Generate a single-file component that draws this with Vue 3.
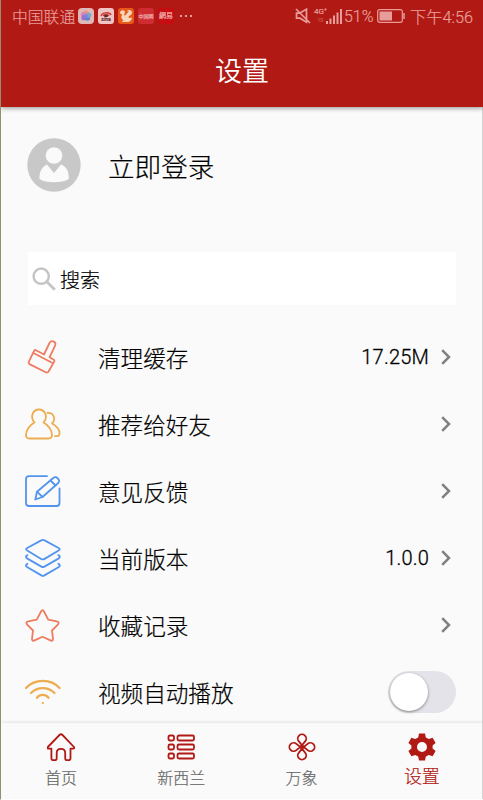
<template>
    <div class="screen">
        <header class="header">
            <div class="status-bar">
                <span class="carrier">中国联通</span>
                <div class="apps">
                    <span class="app app-flower">
                        <svg viewBox="0 0 16 16">
                            <circle cx="8" cy="5" r="2.6" fill="#ed9874" />
                            <circle cx="5.5" cy="6.5" r="2.6" fill="#d782bc" />
                            <circle cx="6" cy="9.7" r="2.6" fill="#9a6fd3" />
                            <circle cx="9.5" cy="10" r="2.6" fill="#5b83cf" />
                            <circle cx="10.7" cy="7" r="2.6" fill="#74a9c7" />
                            <circle cx="8" cy="8" r="2" fill="#8e7fdc" />
                        </svg>
                    </span>
                    <span class="app app-sina">
                        <svg viewBox="0 0 16 16" fill="none">
                            <path d="M3 7c1-4 9-4 10-1M5 7c1-2 5-2 6 0" stroke="#c83b37" stroke-width="1.5" />
                            <ellipse cx="8" cy="7" rx="2" ry="1.3" fill="#57282a" />
                        </svg>
                        <b>sina</b>
                    </span>
                    <span class="app app-uc">
                        <svg viewBox="0 0 16 16" fill="#f9d5ba">
                            <path d="M2 4.5c.5-2 3-3 4.500-1.500C8 4.500 5.500 6 6.500 7.500 8 7.500 8 5.500 10 4.500c1.300-.7.300-1.500-.5-1C8.500 3 10 1.700 11.500 2c3 .6 3.500 4 .5 5.500-1.500.8-2 1.800-1 2.300s1.800-.3 2.600-.3c.8 2.500-1.600 4.500-4.600 4.500H4c.3-1 1-1.500 2-1.700C3.500 11.500 2.500 9 4.300 6.500 3.500 6 2 6 2 4.500z" />
                        </svg>
                    </span>
                    <span class="app app-news"><b>中国网</b></span>
                    <span class="app app-netease"><b>網易</b></span>
                </div>
                <span class="more"><i></i><i></i><i></i></span>
                <div class="system">
                    <svg class="mute" viewBox="0 0 16 16" fill="none" stroke="currentColor" stroke-width="1.7">
                        <path d="M1.500 5.200h3l7-4v13l-6.500-4H1.500zM1 1l14 14" />
                    </svg>
                    <span class="network"><b>4G⁺</b><small>1S</small></span>
                    <svg class="signal" viewBox="0 0 16 15" fill="currentColor">
                        <path d="M0 12h2v3H0zM3.500 9.500h2V15h-2zM7 6.500h2V15H7zM10.500 3.500h2V15h-2zM14 0h2v15h-2z" />
                    </svg>
                    <span class="percent">51%</span>
                    <svg class="battery" viewBox="0 0 28 14" fill="none">
                        <rect x=".7" y=".7" width="24.6" height="12.6" rx="2" stroke="currentColor" stroke-width="1.2" />
                        <path d="M2.500 2.500h12.500v9H2.500z" fill="currentColor" />
                        <path d="M27 4v6" stroke="currentColor" stroke-width="1.5" />
                    </svg>
                    <span class="clock">下午4:56</span>
                </div>
            </div>
            <h1 class="title">设置</h1>
        </header>

        <main class="content">
            <div class="login">
                <svg class="avatar" viewBox="0 0 54 54">
                    <circle cx="27" cy="27" r="26.7" fill="#c8c8c8" />
                    <path d="M20 26.500 27 35l7-8.500c6 2 8 8 7.800 14.500C35 45.400 19 45.400 12.500 41 12 34.500 15 28.500 20 26.500z" fill="#fafafa" />
                    <circle cx="27" cy="17.500" r="8.600" fill="#fafafa" stroke="#c8c8c8" stroke-width=".6" />
                </svg>
                <span>立即登录</span>
            </div>

            <label class="search">
                <svg viewBox="0 0 24 24" fill="none" stroke="#c5c5c5">
                    <circle cx="9.200" cy="9.200" r="7.600" stroke-width="2.500" />
                    <path d="m14.800 14.800 8 8" stroke-width="2.800" />
                </svg>
                <span>搜索</span>
            </label>

            <ul class="list">
                <li v-for="item in items" :key="item.label" class="row">
                    <svg class="icon" :class="item.color" viewBox="0 0 36 40">
                        <path v-for="d in item.paths" :key="d" :d="d" />
                    </svg>
                    <span class="label">{{ item.label }}</span>
                    <span v-if="item.value" class="value">{{ item.value }}</span>
                    <button v-if="item.toggle" class="switch" role="switch" :aria-checked="autoplay"
                        :class="{ on: autoplay }" @click="autoplay = !autoplay">
                        <span class="knob"></span>
                    </button>
                    <svg v-else class="arrow" viewBox="0 0 10 16"><path d="m1.200 1.200 6.800 6.800-6.800 6.800" /></svg>
                </li>
            </ul>
        </main>

        <nav class="tabs">
            <a v-for="tab in tabs" :key="tab.label" class="tab" :class="{ active: tab.active }">
                <svg viewBox="0 0 28 28"><path v-for="d in tab.paths" :key="d" :d="d" /></svg>
                <span>{{ tab.label }}</span>
            </a>
        </nav>
    </div>
</template>

<script setup>
import { ref } from 'vue';

const autoplay = ref(false);

const items = [
    {
        label: '清理缓存', value: '17.25M', color: 'coral',
        paths: [
            'M10.500 13l8.500 4.500 5.500-11.500c2-3.500 7.500-1.200 5.500 2.800l-5.500 11.500 4 2.200c1.200.7 1 1.600.4 2.600l-5.200 9.200c-.7 1.300-1.800 1.600-3 .9L5 27.400c-1.500-.8-1.700-1.800-1-3l5-10.200c.4-.9.7-1.600 1.500-1.200z',
            'M8.500 16l18.500 9.700',
        ],
    },
    {
        label: '推荐给好友', color: 'orange',
        paths: [
            'M9.500 18.500C4.500 13 8 5.500 14 5.500s9.500 7.500 4.500 13c5 2.500 8.500 8 8.500 12.500 0 2.500-1 3.500-3.500 3.500h-19C2 34.500 1 33.500 1 31c0-4.500 3.500-10 8.500-12.500z',
            'M22.500 9c6-.5 9 6 4.500 10.500 5 2.500 8 7 7.500 10 0 2-1 2.800-4.500 2.700',
        ],
    },
    {
        label: '意见反馈', color: 'blue',
        paths: [
            'M22 5.200H4C2 5.200 1 6.200 1 8.200V32c0 2 1 3 3 3h27.500c2 0 3-1 3-3V17.500',
            'M10.300 28.500l1.700-7.800L28.500 6.800c1.500-1.300 3.300-.6 4.500.8 1.300 1.500 1.700 3.100.2 4.400L17.500 26z',
            'M12 20.700l5.500 5.300M25.500 9.500l5 5',
        ],
    },
    {
        label: '当前版本', value: '1.0.0', color: 'blue',
        paths: [
            'M16.200 2.400L2.200 10c-1.500.8-1.500 1.700 0 2.500l14 8.400c1.200.7 2.200.7 3.400 0l14-8.400c1.500-.8 1.500-1.700 0-2.500l-14-7.600c-1.200-.7-2.200-.7-3.400 0z',
            'M2.400 17.200c-1.900.8-1.900 2.400 0 3.400l14 8c1.100.6 1.900.6 3 0l14-8c1.900-1 1.900-2.600 0-3.400',
            'M2.400 25.800c-1.900.8-1.900 2.400 0 3.400l14 8.200c1.100.6 1.900.6 3 0l14-8.200c1.900-1 1.900-2.600 0-3.400',
        ],
    },
    {
        label: '收藏记录', color: 'coral',
        paths: [
            'M16 6.500c.7-1.700 2.300-1.700 3 0l4.200 8.200 8.600 1.700c1.900.3 2.400 1.800 1 3.200l-5.800 5.900 1 8.400c.2 1.700-1 2.300-2.600 1.500l-7.900-3.600-7.900 3.600c-1.600.8-2.800.2-2.600-1.500l1-8.400-5.800-5.900c-1.400-1.400-.9-2.900 1-3.200l8.600-1.700z',
        ],
    },
    {
        label: '视频自动播放', color: 'orange wifi', toggle: true,
        paths: [
            'M1 16C10 6.500 26 6.500 34.500 16',
            'M6 21c6.500-6.500 17-6.500 23.500 0',
            'M12 25.800c3-3.800 8.500-3.800 11.500 0',
            'M17.800 31h.1',
        ],
    },
];

const tabs = [
    { label: '首页', paths: ['M.8 14 12.500 2c1-1 2-1 3 0L27 14c.8 1 .3 1.600-.8 1.600h-2.700v10c0 1-.6 1.600-1.600 1.600h-2.200c-1 0-1.500-.6-1.500-1.600V20c0-5.400-8.500-5.400-8.500 0v5.600c0 1-.5 1.600-1.500 1.600H6c-1 0-1.600-.6-1.600-1.600v-10H1.600C.5 15.600 0 15 .8 14z'] },
    {
        label: '新西兰',
        paths: [2.5, 11.5, 20.5].map(y =>
            `M3 ${y}h2.500q1.500 0 1.500 1.500v2q0 1.500-1.500 1.500H3q-1.500 0-1.500-1.500v-2q0-1.500 1.500-1.500zM12 ${y}h13.500q1.500 0 1.500 1.500v2q0 1.500-1.500 1.500H12q-1.500 0-1.500-1.500v-2q0-1.500 1.500-1.500z`),
    },
    {
        label: '万象',
        paths: [
            'M14 12.300 10.900 8.400a4.200 4.200 0 1 1 6.200 0z',
            'M15.700 14l3.900-3.100a4.200 4.200 0 1 1 0 6.200z',
            'M14 15.700l3.100 3.900a4.200 4.200 0 1 1-6.200 0z',
            'M12.300 14l-3.900 3.100a4.200 4.200 0 1 1 0-6.200z',
            'M12.300 12.300l3.400 3.400M15.700 12.300l-3.400 3.400',
        ],
    },
    {
        label: '设置', active: true,
        paths: ['M11 .5h6l.8 3.900 3 1.700 3.800-1.300 3 5.200-3 2.600v2.800l3 2.600-3 5.200-3.800-1.300-3 1.700-.8 3.900h-6l-.8-3.900-3-1.700-3.800 1.300-3-5.200 3-2.600v-2.800L.4 10l3-5.200 3.800 1.300 3-1.700zM14 9a5 5 0 1 0 0 10 5 5 0 0 0 0-10z'],
    },
];
</script>

<style>
body {
    margin: 0;
}
</style>

<style scoped>
.screen {
    box-sizing: border-box;
    height: 800px;
    display: flex;
    flex-direction: column;
    border-left: 1px solid #939070;
    border-bottom: 1px solid #fff;
    background: #fafafa;
    color: #000;
    font-family: Roboto, "Noto Sans CJK SC", sans-serif;
    font-weight: 300;
    -webkit-text-stroke: .2px currentColor;
    overflow: hidden;
}

.header {
    height: 107px;
    flex: none;
    background: #b11914;
    box-shadow: 0 1px 5px #00000070;
    z-index: 1;
}

.status-bar {
    height: 32px;
    display: flex;
    align-items: center;
    padding: 0 10px 0 11px;
    color: #e79d99;
    font-size: 16px;
    white-space: nowrap;
}

.carrier {
    width: 66px;
    font-size: 15.8px;
}

.apps {
    display: flex;
    gap: 4px;
}

.app {
    width: 16px;
    height: 16px;
    border-radius: 3px;
    display: flex;
    flex-direction: column;
    align-items: center;
    justify-content: center;
    overflow: hidden;
}

.app svg {
    width: 16px;
    height: 16px;
    flex: none;
}

.app b {
    font-size: 5px;
    line-height: 6px;
}

.app-flower { background: #dfb8b7; border-radius: 4px; }
.app-sina { background: #efc4c3; color: #5b2526; }
.app-sina svg { margin-top: -1px; }
.app-sina b { margin-top: -9px; }
.app-uc { background: #e85819; }
.app-news { background: #cf2c31; color: #efb0b0; }
.app-netease { background: #c70c12; color: #f0b2b0; }
.app-netease b { font-size: 7px; }

.more {
    display: flex;
    gap: 3px;
    margin-left: 6px;
}

.more i {
    width: 2px;
    height: 2px;
    background: currentColor;
}

.system {
    display: flex;
    align-items: center;
    margin-left: auto;
}

.mute {
    width: 16px;
    height: 16px;
    margin-right: 1px;
}

.network {
    width: 13px;
    height: 16px;
    margin-left: 2px;
    margin-right: -1px;
    font-size: 8px;
    line-height: 8px;
}

.network b,
.network small {
    display: block;
}

.network small {
    font-size: 5px;
    text-align: center;
    opacity: .5;
}

.signal {
    width: 16px;
    height: 15px;
}

.percent {
    width: 33px;
    margin-left: 2px;
}

.battery {
    width: 28px;
    height: 14px;
}

.clock {
    margin-left: 5px;
    font-size: 16.3px;
}

.title {
    margin: 22px 0 0;
    color: #fff;
    font-size: 27px;
    line-height: 36px;
    font-weight: 350;
    -webkit-text-stroke: 0;
    text-align: center;
}

.content {
    flex: 1;
    min-height: 0;
    padding: 31px 27px 0 26px;
    border-right: 1px solid #d4d4d4;
}

.login {
    height: 53px;
    display: flex;
    align-items: center;
    gap: 27px;
    font-size: 26.6px;
}

.login span {
    padding-top: 1px;
}

.avatar {
    width: 54px;
    height: 54px;
}

.search {
    height: 53px;
    margin: 61px -1px 0 1px;
    padding-left: 4px;
    display: flex;
    align-items: center;
    gap: 4px;
    background: #fff;
    font-size: 20px;
}

.search svg {
    width: 24px;
    height: 24px;
}

.search span {
    padding-top: 2px;
}

.list {
    list-style: none;
    margin: 18px -1px 0 -2px;
    padding: 0;
}

.row {
    height: 67px;
    display: flex;
    align-items: center;
}

.icon {
    width: 36px;
    height: 40px;
    fill: none;
    stroke-width: 1.8;
    stroke-linecap: round;
    stroke-linejoin: round;
}

.coral { stroke: #ef7c60; }
.orange { stroke: #eeac50; }
.blue { stroke: #5294ee; }
.wifi { stroke-width: 2.2; }

.label {
    margin-left: 37px;
    padding-top: 2px;
    font-size: 22.6px;
}

.value {
    margin-left: auto;
    font-size: 20px;
    letter-spacing: .2px;
    -webkit-text-stroke-width: .3px;
}

.arrow {
    width: 10px;
    height: 16px;
    margin-left: auto;
    margin-right: 5px;
    fill: none;
    stroke: #808080;
    stroke-width: 2.5;
}

.value + .arrow {
    margin-left: 12px;
}

.switch {
    width: 68px;
    height: 42px;
    margin-left: auto;
    padding: 2px;
    border: 0;
    border-radius: 21px;
    background: #e4e3e9;
    display: flex;
}

.switch.on {
    justify-content: flex-end;
    background: #b11914;
}

.knob {
    width: 38px;
    height: 38px;
    border-radius: 50%;
    background: #fff;
    box-shadow: 0 1px 3px #00000070;
}

.tabs {
    height: 76px;
    flex: none;
    display: grid;
    grid-template-columns: repeat(4, 1fr);
    background: #fafafa;
    border-right: 1px solid #d4d4d4;
    box-shadow: 0 -1px 3px #00000018;
    z-index: 1;
}

.tab {
    display: flex;
    flex-direction: column;
    align-items: center;
    padding-top: 10px;
    color: #666;
    font-size: 16px;
    line-height: 24px;
}

.tab svg {
    width: 28px;
    height: 28px;
    margin-bottom: 6px;
    fill: none;
    stroke: #b11914;
    stroke-width: 1.8;
    stroke-linejoin: round;
}

.tab.active {
    color: #b11914;
    font-size: 18px;
}

.tab.active svg {
    margin-bottom: 4px;
    fill: #b11914;
    fill-rule: evenodd;
    stroke: none;
}
</style>
